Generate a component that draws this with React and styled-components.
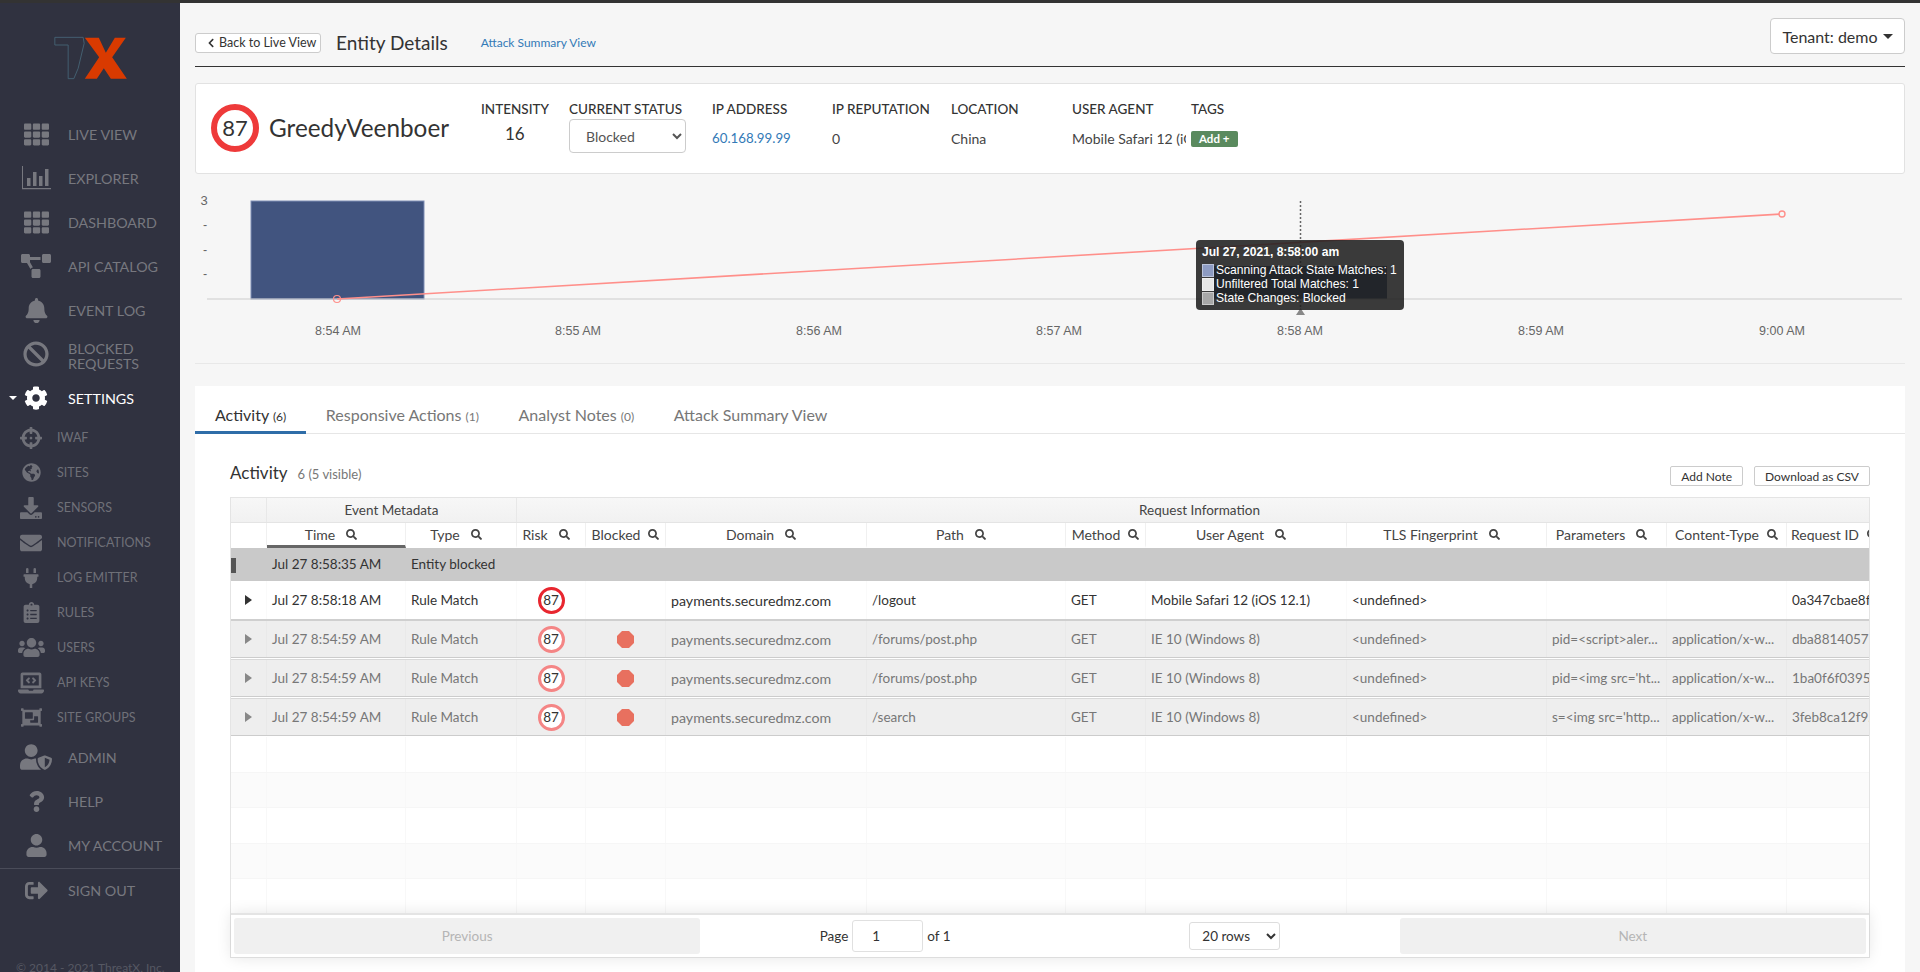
import React from "react";
import styled, { createGlobalStyle } from "styled-components";
import {
  FaTh, FaProjectDiagram, FaBell, FaBan, FaCog, FaCrosshairs, FaGlobeAmericas, FaDownload,
  FaEnvelope, FaPlug, FaClipboardList, FaUsers, FaLaptopCode, FaObjectGroup, FaUserShield,
  FaQuestion, FaUser, FaSignOutAlt, FaSearch, FaChevronLeft,
} from "react-icons/fa";

const COLS = "36px 139px 111px 69px 80px 201px 199px 80px 201px 200px 120px 120px 96px";
const SANS = `Lato, "Open Sans", sans-serif`;

const StatsIcon = ({ size }) => (
  <svg width={size} height={size} viewBox="0 0 30 24" fill="currentColor">
    <path d="M1 0h1v22h28v1.2H1z" />
    <rect x="6" y="12" width="3.5" height="8" />
    <rect x="12" y="6" width="3.5" height="14" />
    <rect x="18" y="10" width="3.5" height="10" />
    <rect x="24" y="3" width="3.5" height="17" />
  </svg>
);

const mainNav = [
  { label: "LIVE VIEW", icon: FaTh, size: 25 },
  { label: "EXPLORER", icon: StatsIcon, size: 30 },
  { label: "DASHBOARD", icon: FaTh, size: 25 },
  { label: "API CATALOG", icon: FaProjectDiagram, size: 30 },
  { label: "EVENT LOG", icon: FaBell, size: 25 },
];
const subNav = [
  { label: "IWAF", icon: FaCrosshairs, size: 22 },
  { label: "SITES", icon: FaGlobeAmericas, size: 19 },
  { label: "SENSORS", icon: FaDownload, size: 22 },
  { label: "NOTIFICATIONS", icon: FaEnvelope, size: 22 },
  { label: "LOG EMITTER", icon: FaPlug, size: 20 },
  { label: "RULES", icon: FaClipboardList, size: 21 },
  { label: "USERS", icon: FaUsers, size: 27 },
  { label: "API KEYS", icon: FaLaptopCode, size: 26 },
  { label: "SITE GROUPS", icon: FaObjectGroup, size: 21 },
];
const lowerNav = [
  { label: "ADMIN", icon: FaUserShield, size: 32 },
  { label: "HELP", icon: FaQuestion, size: 21 },
  { label: "MY ACCOUNT", icon: FaUser, size: 23 },
];

const headers = [
  { name: "Time", sorted: true }, { name: "Type" }, { name: "Risk" }, { name: "Blocked", tight: true },
  { name: "Domain" }, { name: "Path" }, { name: "Method", tight: true }, { name: "User Agent" },
  { name: "TLS Fingerprint" }, { name: "Parameters" }, { name: "Content-Type", tight: true }, { name: "Request ID", tight: true },
];

const rows = [
  { time: "Jul 27 8:58:18 AM", path: "/logout", ua: "Mobile Safari 12 (iOS 12.1)", params: "", type: "", id: "0a347cbae8f1", active: true },
  { time: "Jul 27 8:54:59 AM", path: "/forums/post.php", ua: "IE 10 (Windows 8)", params: "pid=<script>aler...", type: "application/x-w...", id: "dba8814057...", blocked: true },
  { time: "Jul 27 8:54:59 AM", path: "/forums/post.php", ua: "IE 10 (Windows 8)", params: "pid=<img src='ht...", type: "application/x-w...", id: "1ba0f6f0395e", blocked: true, lined: true },
  { time: "Jul 27 8:54:59 AM", path: "/search", ua: "IE 10 (Windows 8)", params: "s=<img src='http...", type: "application/x-w...", id: "3feb8ca12f9...", blocked: true, lined: true },
];

const Chart = () => (
  <ChartWrap>
    <svg width="1710" height="190" viewBox="195 174 1710 190">
      <rect x="251" y="201" width="173" height="98" fill="#41547f" stroke="#7f8db5" strokeWidth="1" />
      <rect x="1214" y="266" width="173" height="33" fill="#41547f" />
      <line x1="207" y1="299" x2="1902" y2="299" stroke="#cccccc" strokeWidth="1" />
      <line x1="1300.5" y1="201" x2="1300.5" y2="308" stroke="#666" strokeWidth="1.5" strokeDasharray="2 2" />
      <line x1="337" y1="299" x2="1782" y2="214" stroke="#ff8f8a" strokeWidth="1.6" />
      <circle cx="337" cy="299" r="3.5" fill="none" stroke="#ff8f8a" strokeWidth="1.2" />
      <circle cx="1782" cy="214" r="3" fill="#f6f6f6" stroke="#ff8f8a" strokeWidth="1.4" />
      <polygon points="1300.5,308 1305,315 1296,315" fill="#888" />
      <g fontFamily="Liberation Sans, sans-serif" fontSize="12.5" fill="#666" textAnchor="middle">
        <text x="204" y="205" fontSize="13">3</text>
        <text x="205" y="229">-</text>
        <text x="205" y="254">-</text>
        <text x="205" y="278">-</text>
        <text x="338" y="335">8:54 AM</text>
        <text x="578" y="335">8:55 AM</text>
        <text x="819" y="335">8:56 AM</text>
        <text x="1059" y="335">8:57 AM</text>
        <text x="1300" y="335">8:58 AM</text>
        <text x="1541" y="335">8:59 AM</text>
        <text x="1782" y="335">9:00 AM</text>
      </g>
    </svg>
    <Tooltip>
      <TipTitle>Jul 27, 2021, 8:58:00 am</TipTitle>
      <TipLine><Swatch $color="#8d9bc2" />Scanning Attack State Matches: 1</TipLine>
      <TipLine><Swatch $color="#e6e6e6" />Unfiltered Total Matches: 1</TipLine>
      <TipLine><Swatch $color="#a8a8a8" />State Changes: Blocked</TipLine>
    </Tooltip>
  </ChartWrap>
);

const StopSign = () => (
  <svg width="17" height="17" viewBox="0 0 17 17">
    <polygon points="5,0 12,0 17,5 17,12 12,17 5,17 0,12 0,5" fill="#e8705f" />
  </svg>
);

const emptyRows = [0, 1, 2, 3, 4];
const emptyCells = Array.from({ length: 13 }, (_, i) => i);

export default function App() {
  return (
    <>
      <GlobalStyle />
      <TopStrip />
      <Shell>
        <Sidebar>
          <LogoWrap>
            <svg width="75" height="44" viewBox="160 108 224 132">
              <path d="M165 112H250L253 130L235 205L222 236H205V135H165Z" fill="none" stroke="#47687a" strokeWidth="2.5" />
              <polygon points="255,113 297,113 318,158 345,113 378,113 337,172 381,236 333,236 312,205 291,236 255,236 298,172" fill="#d93a00" />
            </svg>
          </LogoWrap>
          {mainNav.map((n) => (
            <NavItem key={n.label}>
              <NavIcon><n.icon size={n.size} /></NavIcon>
              <NavLabel>{n.label}</NavLabel>
            </NavItem>
          ))}
          <NavItem>
            <NavIcon><FaBan size={26} /></NavIcon>
            <BlockedLabel>BLOCKED REQUESTS</BlockedLabel>
          </NavItem>
          <NavItem $active>
            <Caret />
            <NavIcon><FaCog size={24} /></NavIcon>
            <NavLabel>SETTINGS</NavLabel>
          </NavItem>
          {subNav.map((n) => (
            <SubItem key={n.label}>
              <SubIcon><n.icon size={n.size} /></SubIcon>
              <span>{n.label}</span>
            </SubItem>
          ))}
          {lowerNav.map((n) => (
            <NavItem key={n.label}>
              <NavIcon><n.icon size={n.size} /></NavIcon>
              <NavLabel>{n.label}</NavLabel>
            </NavItem>
          ))}
          <SignOut>
            <NavIcon><FaSignOutAlt size={23} /></NavIcon>
            <NavLabel>SIGN OUT</NavLabel>
          </SignOut>
          <Copyright>© 2014 - 2021 ThreatX, Inc.</Copyright>
        </Sidebar>

        <Main>
          <Header>
            <HeaderLeft>
              <BackButton><FaChevronLeft size={10} />Back to Live View</BackButton>
              <PageTitle>Entity Details</PageTitle>
              <SummaryLink>Attack Summary View</SummaryLink>
            </HeaderLeft>
            <TenantButton>Tenant: demo<TenantCaret /></TenantButton>
          </Header>

          <EntityCard>
            <EntityName>
              <RiskBadge>87</RiskBadge>
              <NameText>GreedyVeenboer</NameText>
            </EntityName>
            <Field $w={88}>
              <FieldLabel>INTENSITY</FieldLabel>
              <IntensityValue>16</IntensityValue>
            </Field>
            <Field $w={143}>
              <FieldLabel>CURRENT STATUS</FieldLabel>
              <StatusSelect defaultValue="Blocked">
                <option>Blocked</option>
                <option>Watched</option>
              </StatusSelect>
            </Field>
            <Field $w={120}>
              <FieldLabel>IP ADDRESS</FieldLabel>
              <FieldValue $link>60.168.99.99</FieldValue>
            </Field>
            <Field $w={119}>
              <FieldLabel>IP REPUTATION</FieldLabel>
              <FieldValue>0</FieldValue>
            </Field>
            <Field $w={121}>
              <FieldLabel>LOCATION</FieldLabel>
              <FieldValue>China</FieldValue>
            </Field>
            <Field $w={119}>
              <FieldLabel>USER AGENT</FieldLabel>
              <AgentValue>Mobile Safari 12 (iOS 12.1)</AgentValue>
            </Field>
            <Field $w={100}>
              <FieldLabel>TAGS</FieldLabel>
              <TagRow><AddTag>Add +</AddTag></TagRow>
            </Field>
          </EntityCard>

          <Chart />

          <Panel>
            <Tabs>
              <Tab $active>Activity <small>(6)</small></Tab>
              <Tab>Responsive Actions <small>(1)</small></Tab>
              <Tab>Analyst Notes <small>(0)</small></Tab>
              <Tab>Attack Summary View</Tab>
            </Tabs>
            <ActivityBody>
              <ActivityHead>
                <ActivityTitle>Activity <small>6 (5 visible)</small></ActivityTitle>
                <HeadButtons>
                  <SmallButton>Add Note</SmallButton>
                  <SmallButton>Download as CSV</SmallButton>
                </HeadButtons>
              </ActivityHead>
              <TableBox>
                <TableScroll>
                  <GroupRow>
                    <GroupCell />
                    <GroupCell $span={2}>Event Metadata</GroupCell>
                    <GroupCell $span={10}>Request Information</GroupCell>
                  </GroupRow>
                  <HeadRow>
                    <HeadCell />
                    {headers.map((h) => (
                      <HeadCell key={h.name} $sorted={h.sorted} $tight={h.tight}>{h.name}<FaSearch size={11} /></HeadCell>
                    ))}
                  </HeadRow>
                  <EventRow>
                    <EventCell><EventMark /></EventCell>
                    <EventCell>Jul 27 8:58:35 AM</EventCell>
                    <EventCell>Entity blocked</EventCell>
                  </EventRow>
                  {rows.map((r, i) => (
                    <DataRow key={i} $active={r.active} $lined={r.lined}>
                      <ArrowCell><Arrow $active={r.active} /></ArrowCell>
                      <Cell>{r.time}</Cell>
                      <Cell>Rule Match</Cell>
                      <CenterCell><RowRisk $active={r.active}>87</RowRisk></CenterCell>
                      <CenterCell>{r.blocked && <StopSign />}</CenterCell>
                      <DomainCell>payments.securedmz.com</DomainCell>
                      <Cell>{r.path}</Cell>
                      <Cell>GET</Cell>
                      <Cell>{r.ua}</Cell>
                      <Cell>{"<undefined>"}</Cell>
                      <Cell>{r.params}</Cell>
                      <Cell>{r.type}</Cell>
                      <Cell>{r.id}</Cell>
                    </DataRow>
                  ))}
                  {emptyRows.map((n) => (
                    <EmptyRow key={n} $odd={n % 2 === 1}>
                      {emptyCells.map((c) => <EmptyCell key={c} />)}
                    </EmptyRow>
                  ))}
                </TableScroll>
                <Pagination>
                  <PageButton disabled>Previous</PageButton>
                  <PageCenter>
                    <PageInfo>Page <PageInput defaultValue="1" /> of 1</PageInfo>
                    <RowsSelect defaultValue="20 rows">
                      <option>20 rows</option>
                      <option>50 rows</option>
                    </RowsSelect>
                  </PageCenter>
                  <PageButton disabled>Next</PageButton>
                </Pagination>
              </TableBox>
            </ActivityBody>
          </Panel>
        </Main>
      </Shell>
    </>
  );
}

const GlobalStyle = createGlobalStyle`
  html, body { margin: 0; padding: 0; height: 972px; overflow: hidden; background: #f6f6f6; }
  body { font-family: ${SANS}; color: #333; }
  * { box-sizing: border-box; }
`;

const TopStrip = styled.div`
  height: 3px;
  background: #333;
`;

const Shell = styled.div`
  display: flex;
  height: 969px;
  overflow: hidden;
`;

const Sidebar = styled.nav`
  position: relative;
  flex: 0 0 180px;
  background: #303240;
  color: #77787f;
  overflow: hidden;
`;

const LogoWrap = styled.div`
  height: 109px;
  padding: 33px 0 0 53px;
`;

const NavItem = styled.div`
  position: relative;
  display: flex;
  align-items: center;
  height: 44px;
  padding-left: 16px;
  gap: 12px;
  color: ${(p) => (p.$active ? "#fff" : "#77787f")};
`;

const NavIcon = styled.div`
  display: flex;
  align-items: center;
  justify-content: center;
  flex: 0 0 40px;
`;

const NavLabel = styled.span`
  font-size: 14.3px;
  line-height: 15px;
`;

const BlockedLabel = styled(NavLabel)`
  margin-top: 4px;
`;

const Caret = styled.span`
  position: absolute;
  left: 9px;
  top: 20px;
  border-left: 4px solid transparent;
  border-right: 4px solid transparent;
  border-top: 4px solid #fff;
`;

const SubItem = styled.div`
  display: flex;
  align-items: center;
  height: 35px;
  padding-left: 16px;
  gap: 11px;
  font-size: 12.5px;
  color: #6f7078;
`;

const SubIcon = styled.div`
  display: flex;
  align-items: center;
  justify-content: center;
  flex: 0 0 30px;
`;

const SignOut = styled(NavItem)`
  margin-top: 1px;
  border-top: 1px solid #4a4c59;
  height: 43px;
`;

const Copyright = styled.div`
  margin: 49px 0 0 16px;
  font-size: 12px;
  white-space: nowrap;
  color: #565863;
`;

const Main = styled.main`
  flex: 1;
  min-width: 0;
  padding: 0 15px;
  display: flex;
  flex-direction: column;
`;

const Header = styled.header`
  display: flex;
  justify-content: space-between;
  align-items: flex-start;
  height: 64px;
  border-bottom: 1px solid #333;
`;

const HeaderLeft = styled.div`
  display: flex;
  align-items: center;
  gap: 15px;
  margin-top: 28px;
`;

const BackButton = styled.button`
  display: flex;
  align-items: center;
  gap: 3px;
  width: 126px;
  height: 20px;
  padding: 0 0 0 10px;
  background: #fff;
  border: 1px solid #ccc;
  border-radius: 3px;
  font: 12.5px ${SANS};
  color: #333;
`;

const PageTitle = styled.h1`
  margin: 0 18px 0 0;
  font-size: 19px;
  font-weight: 400;
  color: #333;
`;

const SummaryLink = styled.a`
  font-size: 12px;
  color: #337ab7;
`;

const TenantButton = styled.button`
  display: flex;
  align-items: center;
  justify-content: center;
  gap: 5px;
  width: 135px;
  height: 36px;
  margin-top: 15px;
  background: #fff;
  border: 1px solid #ccc;
  border-radius: 4px;
  font: 16px ${SANS};
  color: #333;
`;

const TenantCaret = styled.span`
  border-left: 5px solid transparent;
  border-right: 5px solid transparent;
  border-top: 5px solid #333;
`;

const EntityCard = styled.section`
  display: flex;
  height: 91px;
  margin-top: 16px;
  padding-left: 15px;
  background: #fff;
  border: 1px solid #e2e2e2;
  border-radius: 3px;
`;

const EntityName = styled.div`
  display: flex;
  align-items: center;
  gap: 10px;
  flex: 0 0 270px;
  padding-bottom: 2px;
`;

const RiskBadge = styled.div`
  display: flex;
  align-items: center;
  justify-content: center;
  width: 48px;
  height: 48px;
  border: 6px solid #ee3a3a;
  border-radius: 50%;
  font-size: 22px;
  color: #333;
`;

const NameText = styled.div`
  font-size: 24.3px;
  color: #333;
`;

const Field = styled.div`
  flex: 0 0 ${(p) => p.$w}px;
  padding-top: 17px;
`;

const FieldLabel = styled.div`
  font-size: 13.5px;
  font-weight: 500;
  line-height: 17px;
  color: #333;
  white-space: nowrap;
`;

const FieldValue = styled.div`
  margin-top: 12px;
  font-size: ${(p) => (p.$link ? "13.3px" : "14px")};
  line-height: 17px;
  color: ${(p) => (p.$link ? "#337ab7" : "#444")};
`;

const IntensityValue = styled.div`
  margin: 5px 0 0 24px;
  font-size: 17px;
  line-height: 22px;
  color: #333;
`;

const AgentValue = styled(FieldValue)`
  width: 114px;
  overflow: hidden;
  white-space: nowrap;
`;

const StatusSelect = styled.select`
  display: block;
  width: 117px;
  height: 34px;
  margin-top: 1px;
  padding-left: 12px;
  background: #fff;
  border: 1px solid #ccc;
  border-radius: 4px;
  font: 14px ${SANS};
  color: #555;
`;

const TagRow = styled.div`
  margin-top: 9px;
`;

const AddTag = styled.span`
  display: inline-block;
  height: 16px;
  padding: 0 9px 0 8px;
  background: #5a8a5e;
  border-radius: 2px;
  font-size: 11.5px;
  line-height: 16px;
  font-weight: 700;
  color: #fff;
`;

const ChartWrap = styled.section`
  position: relative;
  height: 190px;
  border-bottom: 1px solid #e8e8e8;

  svg { display: block; }
`;

const Tooltip = styled.div`
  position: absolute;
  left: 1001px;
  top: 66px;
  width: 208px;
  height: 70px;
  padding: 5px 6px;
  background: rgba(30, 30, 30, 0.87);
  border-radius: 4px;
  font-family: "Liberation Sans", sans-serif;
  font-size: 12.1px;
  color: #fff;
`;

const TipTitle = styled.div`
  margin-bottom: 4px;
  font-weight: 700;
  line-height: 14px;
`;

const TipLine = styled.div`
  display: flex;
  align-items: center;
  gap: 2px;
  height: 14px;
  white-space: nowrap;
`;

const Swatch = styled.span`
  width: 12px;
  height: 13px;
  background: ${(p) => p.$color};
  border: 1px solid rgba(255, 255, 255, 0.4);
`;

const Panel = styled.section`
  flex: 1;
  margin-top: 22px;
  background: #fff;
`;

const Tabs = styled.div`
  display: flex;
  height: 48px;
  border-bottom: 1px solid #e6e6e6;
`;

const Tab = styled.div`
  height: 48px;
  padding: 20px 19.5px 0 20px;
  font-size: 16px;
  line-height: 18px;
  color: ${(p) => (p.$active ? "#333" : "#777")};
  border-bottom: 3px solid ${(p) => (p.$active ? "#2f6da8" : "transparent")};

  small { font-size: 12px; }
`;

const ActivityBody = styled.div`
  padding: 0 35px;
`;

const ActivityHead = styled.div`
  display: flex;
  justify-content: space-between;
  align-items: flex-start;
  height: 63px;
  padding-top: 32px;
`;

const ActivityTitle = styled.div`
  font-size: 17px;
  line-height: 20px;
  margin-top: -3px;
  color: #333;

  small { margin-left: 6px; font-size: 13px; color: #777; }
`;

const HeadButtons = styled.div`
  display: flex;
  gap: 11px;
`;

const SmallButton = styled.button`
  height: 20px;
  padding: 0 10px;
  background: #fff;
  border: 1px solid #ccc;
  border-radius: 2px;
  font: 12px ${SANS};
  color: #333;
`;

const TableBox = styled.div`
  height: 461px;
  border: 1px solid #e4e4e4;
  border-bottom: none;
  display: flex;
  flex-direction: column;
  overflow: visible;
`;

const TableScroll = styled.div`
  flex: 1;
  min-height: 0;
  overflow: hidden;
  background: #fff;
`;

const GroupRow = styled.div`
  display: grid;
  grid-template-columns: ${COLS};
  height: 25px;
  background: linear-gradient(#f7f7f7, #f1f1f1);
  border-bottom: 1px solid #e4e4e4;
`;

const GroupCell = styled.div`
  grid-column: span ${(p) => p.$span || 1};
  border-right: 1px solid #e8e8e8;
  font-size: 13.5px;
  line-height: 24px;
  text-align: center;
  color: #444;
`;

const HeadRow = styled.div`
  display: grid;
  grid-template-columns: ${COLS};
  height: 25px;
`;

const HeadCell = styled.div`
  display: flex;
  align-items: center;
  justify-content: center;
  gap: ${(p) => (p.$tight ? "8px" : "11px")};
  padding-right: ${(p) => (p.$tight ? "0" : "10px")};
  border-right: 1px solid #f0f0f0;
  border-bottom: 3px solid ${(p) => (p.$sorted ? "#666" : "transparent")};
  font-size: 14px;
  white-space: nowrap;
  overflow: hidden;
  color: #444;

  svg { flex: none; }
`;

const EventRow = styled.div`
  display: grid;
  grid-template-columns: ${COLS};
  height: 33px;
  background: #c9c9c9;
`;

const EventCell = styled.div`
  position: relative;
  padding-left: 5px;
  font-size: 13.5px;
  line-height: 33px;
  white-space: nowrap;
  color: #333;
`;

const EventMark = styled.span`
  position: absolute;
  left: 0;
  top: 10px;
  width: 5px;
  height: 15px;
  background: #555;
`;

const DataRow = styled.div`
  display: grid;
  grid-template-columns: ${COLS};
  height: ${(p) => (p.$active ? "40px" : p.$lined ? "38px" : "37px")};
  margin-bottom: ${(p) => (p.$active ? "0" : "1px")};
  background: ${(p) => (p.$active ? "#fff" : "#eee")};
  border-top: ${(p) => (p.$lined ? "1px solid #d8d8d8" : "none")};
  border-bottom: ${(p) => (p.$active ? "2px solid #cfcfcf" : "1px solid #cccccc")};
  color: ${(p) => (p.$active ? "#333" : "#777")};
`;

const Cell = styled.div`
  display: flex;
  align-items: center;
  padding-left: 5px;
  border-right: 1px solid rgba(0, 0, 0, 0.02);
  font-size: 13.5px;
  white-space: nowrap;
  overflow: hidden;
`;

const DomainCell = styled(Cell)`
  font-size: 14.2px;
`;

const ArrowCell = styled(Cell)`
  justify-content: center;
  padding-left: 0;
`;

const CenterCell = styled(Cell)`
  justify-content: center;
  padding-left: 0;
`;

const Arrow = styled.span`
  border-top: 5px solid transparent;
  border-bottom: 5px solid transparent;
  border-left: 7px solid ${(p) => (p.$active ? "#333" : "#888")};
`;

const RowRisk = styled.div`
  display: flex;
  align-items: center;
  justify-content: center;
  width: 27px;
  height: 27px;
  background: #fff;
  border: 3px solid ${(p) => (p.$active ? "#e8262f" : "#f48585")};
  border-radius: 50%;
  font-size: 13.5px;
  color: #333;
`;

const EmptyRow = styled.div`
  display: grid;
  grid-template-columns: ${COLS};
  height: 35.5px;
  background: ${(p) => (p.$odd ? "#fbfbfb" : "#fff")};
  border-bottom: 1px solid #f6f6f6;
`;

const EmptyCell = styled.div`
  border-right: 1px solid #f8f8f8;
`;

const Pagination = styled.div`
  flex: 0 0 45px;
  display: flex;
  padding: 3px;
  background: #fff;
  border-top: 2px solid #e4e4e4;
  border-bottom: 1px solid #ddd;
  box-shadow: 0 0 15px rgba(0, 0, 0, 0.1);
`;

const PageButton = styled.button`
  flex: 1;
  padding: 0;
  background: #f0f0f0;
  border: none;
  border-radius: 3px;
  font: 13.5px ${SANS};
  color: #b5b5b5;
`;

const PageCenter = styled.div`
  flex: 1.5;
  display: flex;
  align-items: center;
  justify-content: space-around;
`;

const PageInfo = styled.div`
  display: flex;
  align-items: center;
  gap: 4px;
  font-size: 13.5px;
  color: #333;
`;

const PageInput = styled.input`
  width: 71px;
  height: 32px;
  padding: 0 0 0 19px;
  border: 1px solid #e0e0e0;
  border-radius: 3px;
  font: 13.5px ${SANS};
  color: #333;
`;

const RowsSelect = styled.select`
  width: 91px;
  height: 28px;
  padding-left: 8px;
  background: #fff;
  border: 1px solid #ddd;
  border-radius: 3px;
  font: 13.5px ${SANS};
  color: #333;
`;
